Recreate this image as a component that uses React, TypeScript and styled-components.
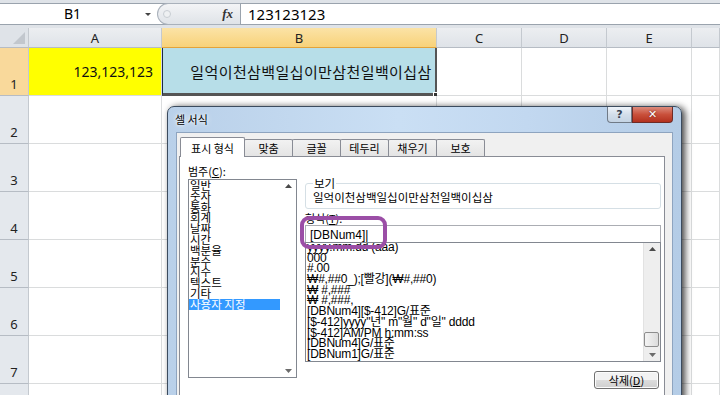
import React from 'react'
import styled, { createGlobalStyle, css } from 'styled-components'

const GlobalStyle = createGlobalStyle`
    html, body {
        margin: 0;
        padding: 0;
        width: 720px;
        height: 395px;
        overflow: hidden;
        background: #fff;
        font-family: "Noto Sans CJK KR", "Liberation Sans", sans-serif;
    }
`

const columns = ['A', 'B', 'C', 'D', 'E', '']
const gridCols = '29px 133px 275px 85px 85px 85px 1fr'

const categories = ['일반', '숫자', '통화', '회계', '날짜', '시간', '백분율', '분수', '지수', '텍스트', '기타', '사용자 지정']

const formats = [
    'yyyy.mm.dd (aaa)',
    '000',
    '#.00',
    '₩#,##0_);[빨강](₩#,##0)',
    '₩ #,###',
    '₩ #,###,',
    '[DBNum4][$-412]G/표준',
    '[$-412]yyyy"년" m"월" d"일" dddd',
    '[$-412]AM/PM h:mm:ss',
    '[DBNum4]G/표준',
    '[DBNum1]G/표준',
]

const tabs = ['표시 형식', '맞춤', '글꼴', '테두리', '채우기', '보호']

const Page = styled.div`
    position: relative;
    width: 720px;
    height: 395px;
    overflow: hidden;
    background: #fff;
`

const TopStrip = styled.div`
    background: #dfe3e8;
    padding: 3px 0 3px;
`

const FormulaBar = styled.div`
    display: flex;
    height: 20px;
    background: #fff;
    border-top: 1px solid #9aa3ad;
    border-bottom: 1px solid #9aa3ad;
    font-size: 14px;
    line-height: 20px;
`

const NameBox = styled.div`
    width: 157px;
    display: flex;
    align-items: center;
`

const NameText = styled.span`
    flex: 1;
    text-align: center;
    font-family: "Noto Sans", "Liberation Sans", sans-serif;
    font-size: 14px;
`

const Caret = styled.span`
    width: 0;
    height: 0;
    border-left: 3px solid transparent;
    border-right: 3px solid transparent;
    border-top: 3px solid #444;
    margin-right: 6px;
`

const FxCapsule = styled.div`
    width: 83px;
    display: flex;
    align-items: center;
    justify-content: space-between;
    padding: 0 7px 0 5px;
    box-sizing: border-box;
    background: linear-gradient(#f3f4f6, #dfe3e8);
    border: 1px solid #a9b1bb;
    border-right: none;
    border-radius: 11px 0 0 11px;
    margin: -1px 0;
`

const FadedKnob = styled.span`
    width: 6px;
    height: 6px;
    border-radius: 50%;
    border: 1px solid #c8cdd3;
    background: #eef0f2;
`

const Fx = styled.span`
    font-family: "Liberation Serif", serif;
    font-style: italic;
    font-weight: bold;
    font-size: 13px;
    color: #333;
`

const FormulaInput = styled.div`
    flex: 1;
    border-left: 1px solid #9aa3ad;
    padding-left: 7px;
    font-family: "Noto Sans", "Liberation Sans", sans-serif;
    font-size: 15px;
`

const SheetRow = styled.div<{ $h: number }>`
    display: grid;
    grid-template-columns: ${gridCols};
    height: ${p => p.$h}px;
`

const headerBase = css`
    box-sizing: border-box;
    border-right: 1px solid #c4c9cf;
    border-bottom: 1px solid #b6bcc4;
    font-family: "Noto Sans", "Liberation Sans", sans-serif;
    font-size: 13px;
    color: #222;
`

const ColHead = styled.div<{ $active?: boolean }>`
    ${headerBase};
    display: flex;
    align-items: center;
    justify-content: center;
    background: ${p => p.$active ? 'linear-gradient(#fbe3a6, #f8d27a)' : 'linear-gradient(#eceef1, #dfe3e8)'};
    ${p => p.$active && 'border-bottom: 1px solid #e3a33a;'}
`

const Corner = styled.div`
    ${headerBase};
    background: #dfe3e8;
    position: relative;
    &::after {
        content: '';
        position: absolute;
        right: 3px;
        bottom: 3px;
        border-left: 12px solid transparent;
        border-bottom: 12px solid #c2c7cd;
    }
`

const RowHead = styled.div<{ $active?: boolean }>`
    ${headerBase};
    display: flex;
    align-items: flex-end;
    justify-content: center;
    padding-bottom: 2px;
    background: ${p => p.$active ? '#f9d99b' : '#e4e8ed'};
`

const Cell = styled.div<{ $bg?: string; $align?: string; $selected?: boolean }>`
    box-sizing: border-box;
    position: relative;
    border-right: 1px solid #dadcdd;
    border-bottom: 1px solid #dadcdd;
    background: ${p => p.$bg || '#fff'};
    display: flex;
    align-items: center;
    justify-content: ${p => p.$align || 'flex-start'};
    padding: 0 8px;
    font-family: "Noto Sans", "Noto Sans CJK KR", sans-serif;
    font-size: 14px;
    color: #111;
    ${p => p.$selected && css`
        padding: 0;
        border-left: 1px solid #1d2a46;
        border-right: 2px solid #555;
        border-bottom: 3px solid #555;
        &::after {
            content: '';
            position: absolute;
            right: -4px;
            bottom: -5px;
            width: 4px;
            height: 4px;
            background: #333;
            border: 1px solid #fff;
        }
    `}
`

const B1Text = styled.span`
    font-family: "Noto Sans CJK KR", sans-serif;
    font-size: 15px;
    letter-spacing: 0.4px;
    white-space: nowrap;
    margin-top: 1px;
    margin-left: 24px;
`

/* dialog */

const Dialog = styled.div`
    position: absolute;
    left: 167px;
    top: 106px;
    width: 515px;
    height: 320px;
    box-sizing: border-box;
    border: 1px solid #3b4b5e;
    border-radius: 7px 7px 0 0;
    background: linear-gradient(90deg, #b9d0e9, #cadff4 45%, #c2d8f0 70%, #b4cce6);
    box-shadow: 3px 1px 7px rgba(0, 0, 0, 0.75);
    display: flex;
    flex-direction: column;
    font-family: "Liberation Sans", "Noto Sans CJK KR", sans-serif;
    font-size: 11px;
    color: #000;
`

const TitleBar = styled.div`
    height: 24px;
    display: flex;
    align-items: flex-start;
    padding-left: 7px;
`

const Title = styled.span`
    margin-top: 4px;
    font-family: "Noto Sans CJK KR", sans-serif;
    font-size: 11px;
    text-shadow: 0 0 6px #fff, 0 0 3px #fff;
`

const CaptionButtons = styled.div`
    margin-left: auto;
    margin-right: 8px;
    display: flex;
`

const CapBtn = styled.div<{ $close?: boolean }>`
    width: ${p => p.$close ? 41 : 25}px;
    height: 16px;
    box-sizing: border-box;
    border: 1px solid ${p => p.$close ? '#6e2b26' : '#707a86'};
    border-top: none;
    border-radius: ${p => p.$close ? '0 0 4px 0' : '0 0 0 4px'};
    background: ${p => p.$close ? 'linear-gradient(#dc8b7c, #c9503b 50%, #b3311e)' : 'linear-gradient(#eef3f9, #d3deea 50%, #c4d3e3)'};
    display: flex;
    align-items: center;
    justify-content: center;
    color: ${p => p.$close ? '#fff' : '#374252'};
    font-family: "DejaVu Sans", sans-serif;
    font-weight: bold;
    font-size: 11px;
    text-shadow: ${p => p.$close ? '0 0 2px #5a1a10' : 'none'};
`

const Inner = styled.div`
    flex: 1;
    margin: 1px 8px 0;
    border: 1px solid #8ea4bf;
    background: #f0f0f0;
    padding: 4px 7px 0 2px;
    display: flex;
    flex-direction: column;
`

const TabStrip = styled.div`
    display: flex;
    align-items: flex-end;
    height: 19px;
    padding-left: 1px;
`

const Tab = styled.div<{ $active?: boolean }>`
    box-sizing: border-box;
    width: ${p => p.$active ? 65 : 49}px;
    height: ${p => p.$active ? 20 : 17}px;
    margin-right: -1px;
    margin-bottom: ${p => p.$active ? -1 : 0}px;
    border: 1px solid #898c95;
    border-bottom: none;
    border-radius: 2px 2px 0 0;
    background: ${p => p.$active ? '#fff' : 'linear-gradient(#f2f2f2, #e4e4e4)'};
    display: flex;
    align-items: center;
    justify-content: center;
    font-family: "Noto Sans CJK KR", sans-serif;
    font-size: 11px;
    position: relative;
    z-index: ${p => p.$active ? 1 : 0};
`

const TabPage = styled.div`
    flex: 1;
    background: #fff;
    border: 1px solid #898c95;
    display: grid;
    grid-template-columns: 109px 356px;
    grid-template-rows: 16px auto;
    column-gap: 8px;
    align-content: start;
    padding: 6px 0 0 8px;
`

const FieldLabel = styled.div`
    font-family: "Noto Sans CJK KR", sans-serif;
    font-size: 11px;
    line-height: 16px;
    grid-column: 1;
`

const Underlined = styled.span`
    text-decoration: underline;
`

const CategoryList = styled.div`
    grid-column: 1;
    height: 199px;
    box-sizing: border-box;
    border: 1px solid #828790;
    display: flex;
    overflow: hidden;
`

const ItemColumn = styled.div`
    flex: 1;
    display: flex;
    flex-direction: column;
`

const CategoryItem = styled.div<{ $selected?: boolean }>`
    height: 10.8px;
    line-height: 10.8px;
    padding-left: 1px;
    font-family: "Noto Sans CJK KR", sans-serif;
    font-size: 11.5px;
    white-space: nowrap;
    background: ${p => p.$selected ? '#3399ff' : 'transparent'};
    color: ${p => p.$selected ? '#fff' : '#000'};
`

const ArrowColumn = styled.div<{ $track?: boolean }>`
    width: 16px;
    display: flex;
    flex-direction: column;
    justify-content: space-between;
    align-items: center;
    padding: 4px 0;
    background: ${p => p.$track ? '#eeeeee' : 'transparent'};
    border-left: ${p => p.$track ? '1px solid #e2e2e2' : 'none'};
    position: relative;
`

const Thumb = styled.div`
    position: absolute;
    left: 0;
    right: 1px;
    top: 89px;
    height: 13px;
    border: 1px solid #8d8d8d;
    border-radius: 2px;
    background: linear-gradient(90deg, #f4f4f4, #dcdcdc);
`

const RightCol = styled.div`
    grid-column: 2;
    grid-row: 2;
    display: flex;
    flex-direction: column;
`

const Preview = styled.fieldset`
    margin: 0;
    padding: 0 7px 4px;
    height: 32px;
    box-sizing: border-box;
    border: 1px solid #d5dfe5;
    border-radius: 3px;
    margin-top: -2px;
`

const Legend = styled.legend`
    padding: 0 1px;
    font-family: "Noto Sans CJK KR", sans-serif;
    font-size: 11.5px;
    line-height: 12px;
`

const PreviewText = styled.div`
    font-family: "Noto Sans CJK KR", sans-serif;
    font-size: 11.5px;
    line-height: 16px;
`

const FormatLabel = styled.div`
    margin-top: 2px;
    height: 14px;
    line-height: 14px;
    font-family: "Noto Sans CJK KR", sans-serif;
    font-size: 11px;
    position: relative;
`

const Highlight = styled.div`
    position: absolute;
    left: -5px;
    top: 5px;
    width: 87px;
    height: 33px;
    box-sizing: border-box;
    border: 4px solid #9b4ea6;
    border-radius: 9px;
    z-index: 3;
`

const FormatInput = styled.div`
    height: 17px;
    box-sizing: border-box;
    border: 1px solid #abadb3;
    border-bottom: none;
    padding-left: 4px;
    font-size: 12px;
    line-height: 18px;
`

const FormatList = styled.div`
    height: 120px;
    box-sizing: border-box;
    border: 1px solid #828790;
    display: flex;
    overflow: hidden;
`

const FormatItems = styled.div`
    flex: 1;
    display: flex;
    flex-direction: column;
    padding-left: 1px;
    margin-top: -1px;
`

const FormatItem = styled.div`
    height: 10.7px;
    line-height: 10.7px;
    font-size: 12px;
    letter-spacing: -0.2px;
    white-space: nowrap;
`

const ButtonRow = styled.div`
    display: flex;
    justify-content: flex-end;
    margin-top: 9px;
    padding-right: 2px;
`

const DeleteButton = styled.div`
    width: 65px;
    height: 18px;
    box-sizing: border-box;
    border: 1px solid #707070;
    border-radius: 3px;
    background: linear-gradient(#f2f2f2 50%, #dddddd 50%, #cfcfcf);
    box-shadow: inset 0 0 0 1px #fcfcfc;
    display: flex;
    align-items: center;
    justify-content: center;
    font-family: "Noto Sans CJK KR", sans-serif;
    font-size: 11px;
`

const ScrollArrow = ({ down }: { down?: boolean }) => (
    <svg width="7" height="4" viewBox="0 0 7 4">
        <path d={down ? 'M0 0 L7 0 L3.5 4 Z' : 'M0 4 L7 4 L3.5 0 Z'} fill={down ? '#6b6b6b' : '#4a4a4a'} />
    </svg>
)

export default function App() {
    const rowHeights = [48, 48, 48, 48, 48, 48, 48, 48]

    return <Page>
        <GlobalStyle />
        <TopStrip>
            <FormulaBar>
                <NameBox><NameText>B1</NameText><Caret /></NameBox>
                <FxCapsule><FadedKnob /><Fx>fx</Fx></FxCapsule>
                <FormulaInput>123123123</FormulaInput>
            </FormulaBar>
        </TopStrip>

        <SheetRow $h={20}>
            <Corner />
            {columns.map((c, i) => <ColHead key={i} $active={c === 'B'}>{c}</ColHead>)}
        </SheetRow>

        {rowHeights.map((h, r) => (
            <SheetRow key={r} $h={h}>
                <RowHead $active={r === 0}>{r + 1}</RowHead>
                {columns.map((c, i) => {
                    if (r === 0 && c === 'A') return <Cell key={i} $bg='#ffff00' $align='flex-end'>123,123,123</Cell>
                    if (r === 0 && c === 'B') return <Cell key={i} $bg='#b7dee8' $align='center' $selected><B1Text>일억이천삼백일십이만삼천일백이십삼</B1Text></Cell>
                    return <Cell key={i} />
                })}
            </SheetRow>
        ))}

        <Dialog>
            <TitleBar>
                <Title>셀 서식</Title>
                <CaptionButtons>
                    <CapBtn>?</CapBtn>
                    <CapBtn $close>✕</CapBtn>
                </CaptionButtons>
            </TitleBar>
            <Inner>
                <TabStrip>
                    {tabs.map((t, i) => <Tab key={t} $active={i === 0}>{t}</Tab>)}
                </TabStrip>
                <TabPage>
                    <FieldLabel>범주(<Underlined>C</Underlined>):</FieldLabel>
                    <CategoryList>
                        <ItemColumn>
                            {categories.map((c, i) => <CategoryItem key={c} $selected={i === categories.length - 1}>{c}</CategoryItem>)}
                        </ItemColumn>
                        <ArrowColumn>
                            <ScrollArrow />
                            <ScrollArrow down />
                        </ArrowColumn>
                    </CategoryList>
                    <RightCol>
                        <Preview>
                            <Legend>보기</Legend>
                            <PreviewText>일억이천삼백일십이만삼천일백이십삼</PreviewText>
                        </Preview>
                        <FormatLabel>
                            형식(<Underlined>T</Underlined>):
                            <Highlight />
                        </FormatLabel>
                        <FormatInput>[DBNum4]|</FormatInput>
                        <FormatList>
                            <FormatItems>
                                {formats.map(f => <FormatItem key={f}>{f}</FormatItem>)}
                            </FormatItems>
                            <ArrowColumn $track>
                                <ScrollArrow />
                                <Thumb />
                                <ScrollArrow down />
                            </ArrowColumn>
                        </FormatList>
                        <ButtonRow>
                            <DeleteButton>삭제(<Underlined>D</Underlined>)</DeleteButton>
                        </ButtonRow>
                    </RightCol>
                </TabPage>
            </Inner>
        </Dialog>
    </Page>
}
